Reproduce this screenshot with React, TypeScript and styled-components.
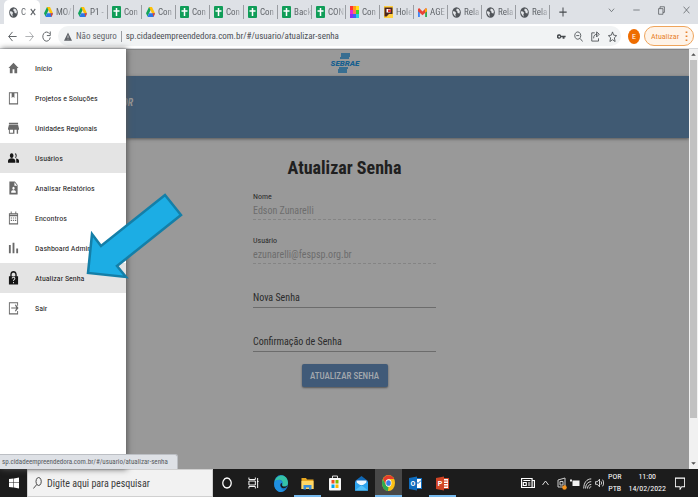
import React from 'react';
import styled, { createGlobalStyle, css } from 'styled-components';

const GlobalStyle = createGlobalStyle`
  * { box-sizing: border-box; }
  html, body { margin: 0; }
  body { font-family: "Roboto Condensed", Roboto, sans-serif; overflow: hidden; }
  button, input { font: inherit; color: inherit; border: 0; background: none; padding: 0; margin: 0; }
  svg { display: block; flex: none; }
  a { color: inherit; text-decoration: none; }
`;

/* ---------- layout ---------- */

const Screen = styled.div`
  display: flex;
  flex-direction: column;
  height: 100vh;
  background: #fff;
`;

const TabStrip = styled.div`
  display: flex;
  align-items: stretch;
  height: 24px;
  padding-left: 4px;
  background: #dee1e6;
`;

const Tab = styled.button<{ $active?: boolean }>`
  display: flex;
  align-items: center;
  gap: 3px;
  flex: 0 1 34px;
  min-width: 0;
  padding-left: 4px;
  white-space: nowrap;
  font-size: 9px;
  color: #5f6368;
  border-right: 1px solid transparent;
  border-image: linear-gradient(transparent 25%, #9a9da2 25%, #9a9da2 75%, transparent 75%) 1;
  ${p => p.$active && css`
    flex-basis: 36px;
    padding-left: 5px;
    background: #fff;
    border: 0;
    border-radius: 5px 5px 0 0;
  `}
`;

const TabTitle = styled.span<{ $short?: boolean }>`
  flex: 0 0 ${p => (p.$short ? 6 : 16)}px;
  text-align: left;
  line-height: 12px;
  mask-image: linear-gradient(to right, #000 50%, rgba(0, 0, 0, 0.2));
`;

const IconButton = styled.button`
  display: grid;
  place-items: center;
  flex: none;
  width: 16px;
  color: #45494d;
`;

const NewTab = styled(IconButton)`
  margin-left: 5px;
`;

const WindowButtons = styled.div`
  display: flex;
  margin-left: auto;
  padding: 0 4px 4px 0;
  gap: 9px;
`;

const Toolbar = styled.div`
  display: flex;
  align-items: center;
  height: 25px;
  padding: 0 4px;
  border-bottom: 1px solid #d5d7da;
  background: #fff;
  gap: 1px;
`;

const AddressBar = styled.div`
  display: flex;
  align-items: center;
  flex: 1;
  height: 20px;
  margin: 0 6px 0 3px;
  padding: 0 1px 0 6px;
  gap: 4px;
  border-radius: 10px;
  background: #f1f3f4;
  font-size: 9px;
  color: #5f6368;
`;

const Url = styled.input`
  flex: 1;
  min-width: 0;
  padding-left: 4px;
  border-left: 1px solid #9a9da2;
  line-height: 11px;
  font-size: 9px;
  color: #4b4f54;
  outline: 0;
`;

const Actions = styled.div`
  display: flex;
  gap: 1px;
`;

const Avatar = styled.button`
  width: 12px;
  height: 15px;
  border-radius: 50%;
  background: #ee6c00;
  color: #fff;
  font-size: 8px;
`;

const UpdateButton = styled.button`
  display: flex;
  align-items: center;
  justify-content: space-between;
  width: 50px;
  height: 20px;
  margin-left: 3px;
  padding: 0 5px 0 6px;
  border: 1px solid #efa55c;
  border-radius: 10px;
  background: #fef3e8;
  color: #e8822b;
  font-size: 8px;
`;

const Viewport = styled.div`
  position: relative;
  display: flex;
  flex: 1;
  min-height: 0;
`;

const Page = styled.div`
  flex: 1;
  min-width: 0;
  background: #999;
  border-top: 1px solid #858585;
`;

const Brand = styled.header`
  display: grid;
  place-items: center;
  height: 26px;
`;

const Banner = styled.div`
  display: flex;
  align-items: center;
  height: 62px;
  padding: 0 0 10px 122px;
  background: #405a73;
  box-shadow: 0 1px 3px #555;
  color: #999;
  font-size: 10px;
  font-weight: 700;
  font-style: italic;
`;

const Form = styled.form`
  display: flex;
  flex-direction: column;
  align-items: center;
  width: 183px;
  max-width: 100%;
  margin: 0 auto;
  padding-top: 18px;
`;

const Title = styled.h1`
  margin: 0 0 12px;
  font-size: 18px;
  line-height: 24px;
  font-weight: 700;
  color: #202020;
  white-space: nowrap;
`;

const Field = styled.div<{ $filled?: boolean }>`
  display: grid;
  align-self: stretch;
  height: 28px;
  margin-bottom: 16px;
  border-bottom: 1px ${p => (p.$filled ? 'dashed #848484' : 'solid #6c6c6c')};
  ${p => (p.$filled
    ? css`grid-template-rows: 10px 17px;`
    : css`
        grid-template-rows: 27px;
        label { font-size: 10px; line-height: 12px; padding-top: 12px; }
        label, input { grid-area: 1 / 1; }
      `)}
`;

const FieldLabel = styled.label`
  font-size: 8px;
  line-height: 10px;
  color: #2b2b2b;
`;

const FieldInput = styled.input`
  width: 100%;
  outline: 0;
  font-size: 10px;
  color: #2b2b2b;
  &:disabled { color: #6d6d6d; }
`;

const Submit = styled.button`
  height: 23px;
  margin-top: -4px;
  width: 86px;
  border-radius: 2px;
  background: #405a78;
  box-shadow: 0 1px 2px #555;
  color: #a3a8ad;
  font-size: 9px;
  font-weight: 500;
  white-space: nowrap;
`;

const Drawer = styled.nav`
  position: absolute;
  left: 0;
  top: 0;
  bottom: 0;
  width: 126px;
  padding-top: 4px;
  background: #fff;
  box-shadow: 1px 0 6px #555;
`;

const MenuItem = styled.a<{ $selected?: boolean }>`
  display: flex;
  align-items: center;
  gap: 16px;
  height: 30px;
  padding-left: 8px;
  font-size: 8px;
  white-space: nowrap;
  color: #202020;
  background: ${p => (p.$selected ? '#e4e4e4' : 'transparent')};
  svg { color: ${p => (p.$selected ? '#161616' : '#696969')}; }
`;

const Pointer = styled.svg`
  position: absolute;
  left: 84px;
  top: 142px;
`;

const ScrollTrack = styled.div`
  display: flex;
  flex-direction: column;
  width: 9px;
  background: #f1f1f1;
`;

const ScrollArrow = styled.button<{ $end?: boolean }>`
  display: grid;
  place-items: center;
  height: 11px;
  margin-top: ${p => (p.$end ? 'auto' : 0)};
  color: #505050;
`;

const ScrollThumb = styled.div`
  flex: 0 1 358px;
  margin: 0 1px;
  background: #c1c1c1;
`;

const LinkStatus = styled.div`
  position: absolute;
  left: 0;
  bottom: 0;
  height: 15px;
  padding: 0 9px 0 2px;
  border: solid #bcbfc4;
  border-width: 1px 1px 0 0;
  border-radius: 0 3px 0 0;
  background: #dee1e6;
  color: #55595e;
  font-size: 7px;
  line-height: 14px;
`;

const Taskbar = styled.footer`
  display: flex;
  align-items: stretch;
  height: 28px;
  background: #1c1c1c;
  color: #fff;
`;

const TaskButton = styled.button<{ $open?: boolean; $current?: boolean }>`
  display: grid;
  place-items: center;
  flex: 0 1 27px;
  border-bottom: 2px solid ${p => (p.$open ? '#76b9ed' : 'transparent')};
  border-top: 2px solid transparent;
  background: ${p => (p.$current ? '#484848' : 'transparent')};
`;

const Search = styled.label`
  display: flex;
  align-items: center;
  flex: 0 1 186px;
  gap: 5px;
  padding-left: 5px;
  background: #f2f2f2;
  border: 1px solid #d0d0d0;
  color: #333;
`;

const SearchInput = styled.input`
  flex: 1;
  min-width: 0;
  font-size: 10px;
  outline: 0;
  &::placeholder { color: #3a3a3a; opacity: 1; }
`;

const Tray = styled.div`
  display: flex;
  align-items: center;
  gap: 3px;
  margin-left: auto;
  padding-right: 13px;
`;

const TrayText = styled.div<{ $clock?: boolean }>`
  padding: ${p => (p.$clock ? '0 6px 0 3px' : '0 1px')};
  font-size: 8px;
  line-height: 12px;
  text-align: center;
`;

/* ---------- icons ---------- */

const Globe = () => (
  <svg width="9" height="11" viewBox="0 0 24 24" preserveAspectRatio="none">
    <circle cx="12" cy="12" r="11.5" fill="#51555a" />
    <path d="M3 9l5 1 3 3-2 3 1 5-4-3-4-6zM13 3l-2 4 3 2 1 4 5 1 1-5-3-4z" fill="#e4e6e9" />
  </svg>
);
const Drive = () => (
  <svg width="9" height="10" viewBox="0 0 24 22" preserveAspectRatio="none">
    <path d="M8 0h8l-4 7-8 14L0 14z" fill="#12a45b" />
    <path d="M8 0h8l8 14h-8z" fill="#ffc107" />
    <path d="M8 14h16l-4 8H4z" fill="#2b78e8" />
    <path d="M17 14h7l-4 8z" fill="#e5412f" />
  </svg>
);
const Sheet = () => (
  <svg width="9" height="12" viewBox="0 0 18 24">
    <rect width="18" height="24" rx="2" fill="#109d58" />
    <path d="M9 4v16M3 10h12" stroke="#fff" strokeWidth="3" />
  </svg>
);
const Palette = () => (
  <svg width="9" height="12" viewBox="0 0 9 12">
    <path fill="#f33" d="M0 0h3v4H0z" /><path fill="#ff9b1a" d="M3 0h3v4H3z" /><path fill="#ffe01a" d="M6 0h3v4H6z" />
    <path fill="#e22bd8" d="M0 4h3v4H0z" /><path fill="#ff7a59" d="M3 4h3v4H3z" /><path fill="#38d430" d="M6 4h3v4H6z" />
    <path fill="#8430f0" d="M0 8h3v4H0z" /><path fill="#3b62f5" d="M3 8h3v4H3z" /><path fill="#22cfe0" d="M6 8h3v4H6z" />
  </svg>
);
const Holder = () => (
  <svg width="9" height="12" viewBox="0 0 18 24">
    <rect width="18" height="24" fill="#ffcf3f" />
    <path d="M1 3h16v13h-7l-5 5H1z" fill="#4b2420" />
    <path d="M5 6h8v7H5z" fill="#fff" /><path d="M8 7h6v5H8z" fill="#e5352d" />
  </svg>
);
const Gmail = () => (
  <svg width="9" height="9" viewBox="0 0 24 20" preserveAspectRatio="none">
    <path d="M0 3v17h5V8z" fill="#4285f4" /><path d="M24 3v17h-5V8z" fill="#34a853" />
    <path d="M0 2l3-2 9 8 9-8 3 2v5l-12 9L0 7z" fill="#ea4335" /><path d="M19 2l4-1 1 6-5 3z" fill="#fbbc04" />
  </svg>
);

type LineProps = { d: string; w?: number; h?: number; s?: number };
const Line = ({ d, w = 10, h = 11, s = 2 }: LineProps) => (
  <svg width={w} height={h} viewBox="0 0 24 24" preserveAspectRatio="none" fill="none" stroke="currentColor" strokeWidth={s}>
    <path d={d} />
  </svg>
);
const Solid = ({ d, w = 11, h = 14 }: LineProps) => (
  <svg width={w} height={h} viewBox="0 0 24 24" preserveAspectRatio="none" fill="currentColor" fillRule="evenodd">
    <path d={d} />
  </svg>
);

const Sebrae = () => (
  <svg width="32" height="20" viewBox="0 0 32 20" role="img" aria-label="SEBRAE">
    <path d="M12 1h9M12 3h9M11 5h9M10 15h9M9 17h9M9 19h9" stroke="#18608f" strokeWidth="1.4" />
    <text x="16" y="13" textAnchor="middle" fontFamily="Roboto, sans-serif" fontSize="8" fontWeight="900" fontStyle="italic" fill="#18608f">SEBRAE</text>
  </svg>
);

const Windows = () => (
  <svg width="10" height="12" viewBox="0 0 20 24"><path fill="#fff" d="M0 4l9-1v8H0zM10 3l10-2v10H10zM0 12h9v9l-9-1zM10 12h10v11l-10-2z" /></svg>
);
const Edge = () => (
  <svg width="14" height="17" viewBox="0 0 24 24" preserveAspectRatio="none">
    <circle cx="12" cy="12" r="12" fill="#1877c9" />
    <path d="M1 10C3-2 23-3 24 11c0 6-8 7-10 4 3-5-1-9-6-8-3 0-6 1-7 3z" fill="#35c3a6" />
    <path d="M1 10c3-5 13-4 13 2-4-1-5 9 5 10C8 28-2 19 1 10z" fill="#1f8fe0" />
    <path d="M14 15c2 2 7 2 9-1-1 5-8 6-11 3-2-2-1-5 1-6 1 1 0 3 1 4z" fill="#1b1b1b" />
  </svg>
);
const Folder = () => (
  <svg width="13" height="13" viewBox="0 0 26 26">
    <path d="M1 2h9l2 3h13v19H1z" fill="#e9a820" /><path d="M1 8h24v16H1z" fill="#ffd766" />
    <path d="M5 25v-9h16v9h-5v-4h-6v4z" fill="#3c8fd8" />
  </svg>
);
const Store = () => (
  <svg width="12" height="16" viewBox="0 0 24 32">
    <path d="M7 8V2h10v6" fill="none" stroke="#ddd" strokeWidth="2" /><rect y="6" width="24" height="25" rx="2" fill="#f7f7f7" />
    <path fill="#f25022" d="M5 10h6v7H5z" /><path fill="#7fba00" d="M13 10h6v7h-6z" /><path fill="#00a4ef" d="M5 19h6v7H5z" /><path fill="#ffb900" d="M13 19h6v7h-6z" />
  </svg>
);
const Mail = () => (
  <svg width="13" height="15" viewBox="0 0 26 30">
    <path d="M0 10L13 0l13 10v19H0z" fill="#1068b5" /><path d="M3 9h20v9H3z" fill="#eef7ff" />
    <path d="M0 11l13 9 13-9v18H0z" fill="#2da3ee" /><path d="M0 29l13-11 13 11z" fill="#52bff8" />
  </svg>
);
const Chrome = () => (
  <svg width="13" height="16" viewBox="0 0 24 24" preserveAspectRatio="none">
    <circle cx="12" cy="12" r="12" fill="#fbc116" />
    <path d="M2 6a12 12 0 0 1 20.500 0H12L7 15z" fill="#e33b2e" /><path d="M1.600 6L7 15l5 3-1 6A12 12 0 0 1 1.600 6z" fill="#2da94f" />
    <circle cx="12" cy="12" r="5.500" fill="#fff" /><circle cx="12" cy="12" r="4.300" fill="#3a7de9" />
  </svg>
);
const Office = ({ letter, color }: { letter: string; color: string }) => (
  <svg width="13" height="15" viewBox="0 0 26 30">
    <rect x="11" y="5" width="14" height="20" fill="#fff" stroke={color} strokeWidth="2" />
    <path d={letter === 'O' ? 'M12 9l6 6 6-6' : 'M15 10h8M15 15h8M15 20h8'} stroke={color} strokeWidth="2" fill="none" />
    <path d="M0 4l16-3v28L0 26z" fill={color} />
    <text x="8" y="20" textAnchor="middle" fontFamily="Roboto, sans-serif" fontWeight="700" fontSize="14" fill="#fff">{letter}</text>
  </svg>
);
const ScreenShare = () => (
  <svg width="10" height="13" viewBox="0 0 20 26">
    <path d="M2 6l14-4v18H2zM6 9h6v7H6z" fill="none" stroke="#ccc" strokeWidth="2" />
    <circle cx="15" cy="21" r="4.500" fill="#f7941d" />
  </svg>
);
const Battery = () => (
  <svg width="10" height="10" viewBox="0 0 20 20">
    <path d="M0 3h4v4H0zM5 5h14v11H5z" fill="#f2f2f2" />
  </svg>
);

/* ---------- data ---------- */

const tabs: [React.FC, string][] = [
  [Drive, 'MO/'], [Drive, 'P1 -'], [Sheet, 'Con'], [Drive, 'Con'], [Sheet, 'Con'], [Sheet, 'Con'],
  [Sheet, 'Con'], [Sheet, 'Back'], [Sheet, 'CON'], [Palette, 'Con'], [Holder, 'Hole'], [Gmail, 'AGE'],
  [Globe, 'Rela'], [Globe, 'Rela'], [Globe, 'Rela'],
];

const menu: { label: string; d: string; selected?: boolean }[] = [
  { label: 'Início', d: 'M10 21v-7h4v7h6v-9h3L12 3 1 12h3v9z' },
  { label: 'Projetos e Soluções', d: 'M2 2h20v21H2zM4 4v17h16V4h-6v8l-3-2-3 2V4z' },
  { label: 'Unidades Regionais', d: 'M2 3h20v3H2zM2 7h20l2 6v2h-2v7h-3v-7h-5v7H2v-7H0v-2zM4 15v5h7v-5z' },
  { label: 'Usuários', selected: true, d: 'M8 4a4 4 0 1 0 .01 0zM15 4a4 4 0 0 1 0 8 6 6 0 0 0 0-8zM0 20v-3c0-6 16-6 16 0v3zM17 13c5 0 7 2 7 4v3h-6v-3c0-2 0-3-1-4z' },
  { label: 'Analisar Relatórios', d: 'M3 1h12l6 6v16H3zM14 2v6h6zM12 10a2.500 2.500 0 1 0 .01 0zM7 20h10v-2c0-3-10-3-10 0z' },
  { label: 'Encontros', d: 'M2 4h4V1h2v3h8V1h2v3h4v19H2zM4 9v12h16V9zM6 11h3v2H6zM11 11h2v2h-2zM15 11h3v2h-3zM6 15h3v2H6zM11 15h2v2h-2zM15 15h3v2h-3zM4 6v1h16V6z' },
  { label: 'Dashboard Adminis', d: 'M2 7h4v14H2zM10 3h4v18h-4zM18 13h4v8h-4z' },
  { label: 'Atualizar Senha', selected: true, d: 'M5 9V6c0-8 14-8 14 0v3h3v14H2V9zM8 9h8V6c0-4-8-4-8 0zM8 13h2c0-2 4-2 4 0 0 1-3 2-3 4h2c0-2 3-2 3-4 0-4-8-4-8 0zM11 19h2v2h-2z' },
  { label: 'Sair', d: 'M2 2h20v6h-2V4H4v17h16v-4h2v6H2zM7 11h11l-3-4 2-1 6 6-6 6-2-1 3-4H7z' },
];

const apps: { name: string; icon: React.ReactNode; open?: boolean; current?: boolean }[] = [
  { name: 'Cortana', icon: <Line w={10} h={12} s={3} d="M12 2a10 10 0 1 0 .01 0z" /> },
  { name: 'Visão de tarefas', icon: <Line w={11} h={12} s={2} d="M2 1v4h14V1M2 23v-4h14v4M2 8h14v8H2zM21 2v20M20 9h3" /> },
  { name: 'Edge', icon: <Edge /> },
  { name: 'Explorador', icon: <Folder />, open: true },
  { name: 'Loja', icon: <Store /> },
  { name: 'Email', icon: <Mail /> },
  { name: 'Chrome', icon: <Chrome />, open: true, current: true },
  { name: 'Outlook', icon: <Office letter="O" color="#0f6cbd" /> },
  { name: 'PowerPoint', icon: <Office letter="P" color="#cf4425" />, open: true },
];

const fields = [
  { id: 'nome', label: 'Nome', value: 'Edson Zunarelli' },
  { id: 'usuario', label: 'Usuário', value: 'ezunarelli@fespsp.org.br' },
  { id: 'nova', label: 'Nova Senha' },
  { id: 'confirmacao', label: 'Confirmação de Senha' },
];

export default function App() {
  return (
    <Screen>
      <GlobalStyle />
      <TabStrip>
        <Tab $active>
          <Globe />
          <TabTitle $short>C</TabTitle>
          <Line w={6} h={8} s={4} d="M3 3l18 18M21 3L3 21" />
        </Tab>
        {tabs.map(([Icon, title], i) => (
          <Tab key={i}><Icon /><TabTitle>{title}</TabTitle></Tab>
        ))}
        <NewTab aria-label="Nova guia"><Line w={8} h={10} s={3} d="M12 1v22M1 12h22" /></NewTab>
        <WindowButtons>
          <IconButton aria-label="Pesquisar guias"><Line w={7} h={8} d="M3 8l9 9 9-9" /></IconButton>
          <IconButton aria-label="Minimizar"><Line w={7} h={8} d="M1 12h22" /></IconButton>
          <IconButton aria-label="Restaurar"><Line w={7} h={9} d="M2 7h15v15H2zM7 7V2h15v15h-5" /></IconButton>
          <IconButton aria-label="Fechar"><Line w={7} h={8} d="M2 2l20 20M22 2L2 22" /></IconButton>
        </WindowButtons>
      </TabStrip>

      <Toolbar>
        <IconButton aria-label="Voltar"><Line w={9} h={11} s={2} d="M23 12H2M12 2L2 12l10 10" /></IconButton>
        <IconButton aria-label="Avançar" disabled><Line w={9} h={11} s={1} d="M1 12h21M12 2l10 10-10 10" /></IconButton>
        <IconButton aria-label="Recarregar"><Line w={9} h={11} s={2} d="M20 6a10 10 0 1 0 2 8M22 1v9h-9" /></IconButton>
        <AddressBar>
          <Solid w={8} h={9} d="M12 1l12 22H0zM11 9v7h2V9zM11 18v2h2v-2z" />
          <span>Não seguro</span>
          <Url aria-label="Endereço" defaultValue="sp.cidadeempreendedora.com.br/#/usuario/atualizar-senha" />
          <Actions>
            <IconButton aria-label="Senhas"><Solid w={9} h={9} d="M6 6a6 6 0 1 0 5 8h4v4h5v-4h3v-4H11c-1-3-3-4-5-4zM6 10a2 2 0 1 1-.01 0z" /></IconButton>
            <IconButton aria-label="Zoom"><Line w={9} h={11} d="M10 2a8 8 0 1 0 .01 0zM16 16l7 7M6 10h8" /></IconButton>
            <IconButton aria-label="Compartilhar"><Line w={9} h={11} d="M10 4H2v18h18v-6M7 16c0-7 4-9 10-9M15 2l7 5-7 6z" /></IconButton>
            <IconButton aria-label="Favorito"><Line w={9} h={11} d="M12 2l3 7 8 1-6 5 2 8-7-4-7 4 2-8-6-5 8-1z" /></IconButton>
          </Actions>
        </AddressBar>
        <Avatar>E</Avatar>
        <UpdateButton>Atualizar <Line w={3} h={12} s={14} d="M12 3v3M12 11v3M12 19v3" /></UpdateButton>
      </Toolbar>

      <Viewport>
        <Page>
          <Brand><Sebrae /></Brand>
          <Banner>OR</Banner>
          <Form onSubmit={e => e.preventDefault()}>
            <Title>Atualizar Senha</Title>
            {fields.map(f => (
              <Field key={f.id} $filled={!!f.value}>
                <FieldLabel htmlFor={f.id}>{f.label}</FieldLabel>
                <FieldInput id={f.id} type={f.value ? 'text' : 'password'} defaultValue={f.value} disabled={!!f.value} />
              </Field>
            ))}
            <Submit type="submit">ATUALIZAR SENHA</Submit>
          </Form>
        </Page>
        <ScrollTrack>
          <ScrollArrow aria-label="Rolar para cima"><Solid w={5} h={3} d="M12 2l11 20H1z" /></ScrollArrow>
          <ScrollThumb />
          <ScrollArrow $end aria-label="Rolar para baixo"><Solid w={5} h={3} d="M1 2h22L12 22z" /></ScrollArrow>
        </ScrollTrack>
        <Drawer>
          {menu.map(m => (
            <MenuItem key={m.label} href="#" $selected={m.selected}><Solid d={m.d} />{m.label}</MenuItem>
          ))}
        </Drawer>
        <Pointer width="100" height="92" viewBox="84 191 100 92">
          <path d="M88 273l4-39 9 12 64-51 16 20-64 51 9 11z" fill="#1cade4" stroke="#147fa8" strokeWidth="2.500" />
        </Pointer>
        <LinkStatus>sp.cidadeempreendedora.com.br/#/usuario/atualizar-senha</LinkStatus>
      </Viewport>

      <Taskbar>
        <TaskButton aria-label="Iniciar"><Windows /></TaskButton>
        <Search>
          <Line w={9} h={12} d="M15 1a7 8 0 1 0 .01 0zM10 15l-9 8" />
          <SearchInput aria-label="Pesquisar" placeholder="Digite aqui para pesquisar" />
        </Search>
        {apps.map(a => (
          <TaskButton key={a.name} aria-label={a.name} $open={a.open} $current={a.current}>{a.icon}</TaskButton>
        ))}
        <Tray>
          <Line w={14} h={12} s={2} d="M1 3h18v18H1zM19 7h4v14h-4M4 7h12M4 11h5v6H4zM12 12h4M12 16h4" />
          <IconButton aria-label="Ícones ocultos"><Chevron /></IconButton>
          <ScreenShare />
          <Battery />
          <Line w={9} h={11} s={2} d="M2 23C2 10 10 2 22 2M7 23C7 14 13 8 22 8M12 23c0-5 4-9 10-9M17 23c0-2 2-4 5-4" />
          <Line w={9} h={10} s={2} d="M1 9h5l6-6v18l-6-6H1zM16 8c2 2 2 6 0 8M20 4c4 4 4 12 0 16" />
          <TrayText>POR<br />PTB</TrayText>
          <TrayText $clock>11:00<br />14/02/2022</TrayText>
          <Line w={10} h={13} s={2} d="M1 2h22v16h-7l-4 5v-5H1z" />
        </Tray>
      </Taskbar>
    </Screen>
  );
}

function Chevron() {
  return <svg width="7" height="6" viewBox="0 0 14 12" fill="none" stroke="#ddd" strokeWidth="2"><path d="M1 10l6-8 6 8" /></svg>;
}
